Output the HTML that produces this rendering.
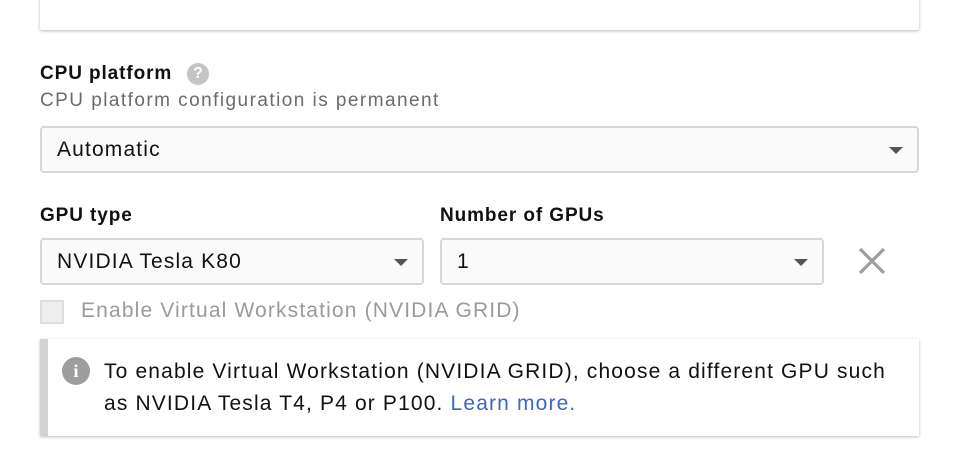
<!DOCTYPE html>
<html><head><meta charset="utf-8"><style>
*{box-sizing:border-box;margin:0;padding:0}
body{width:958px;height:468px;background:#fff;font-family:"Liberation Sans",Arial,sans-serif;position:relative;overflow:hidden;color:#202124}
.abs{position:absolute}
.card{left:40px;top:-4px;width:879px;height:34px;background:#fff;box-shadow:0 1px 3px rgba(0,0,0,.28);border-radius:2px}
.lbl{font-weight:bold;font-size:19px;letter-spacing:0.9px;color:#111}
.big{font-size:21px;letter-spacing:1.15px}
.sel{border:2px solid #d7d7d7;border-radius:4px;background:#fafafa;height:47px;color:#111;padding:0 0 0 15px;line-height:43px}
.arr{position:absolute;right:14px;top:19px;width:0;height:0;border-left:7px solid transparent;border-right:7px solid transparent;border-top:7px solid #555}
</style></head><body>
<div class="abs card"></div>
<div class="abs lbl" style="left:40px;top:63px">CPU platform</div>
<div class="abs" style="left:187px;top:63px;width:22px;height:22px;border-radius:50%;background:#c4c4c4;color:#fff;font-weight:bold;font-size:16px;text-align:center;line-height:22px">?</div>
<div class="abs" style="left:40px;top:90px;font-size:19px;letter-spacing:1.45px;color:#6b6b6b">CPU platform configuration is permanent</div>
<div class="abs sel big" style="left:40px;top:126px;width:879px">Automatic<div class="arr"></div></div>
<div class="abs lbl" style="left:40px;top:205px">GPU type</div>
<div class="abs lbl" style="left:440px;top:205px">Number of GPUs</div>
<div class="abs sel big" style="left:40px;top:238px;width:384px">NVIDIA Tesla K80<div class="arr"></div></div>
<div class="abs sel big" style="left:440px;top:238px;width:384px">1<div class="arr"></div></div>
<svg class="abs" style="left:858px;top:247px" width="28" height="28" viewBox="0 0 28 28"><path d="M2 2L26 26M26 2L2 26" stroke="#9e9e9e" stroke-width="3.2"/></svg>
<div class="abs" style="left:40px;top:300px;width:24px;height:24px;background:#eee;border:2px solid #ddd"></div>
<div class="abs big" style="left:81px;top:299px;color:#9a9a9a">Enable Virtual Workstation (NVIDIA GRID)</div>
<div class="abs" style="left:40px;top:339px;width:879px;height:97px;background:#fff;border-left:8px solid #d3d3d3;box-shadow:0 1px 3px rgba(0,0,0,.25)"></div>
<div class="abs" style="left:62px;top:357px;width:28px;height:28px;border-radius:50%;background:#9e9e9e;color:#fff;font-weight:bold;font-size:18px;text-align:center;line-height:28px;font-family:'Liberation Serif',serif">i</div>
<div class="abs big" style="left:104px;top:356px;line-height:32px;color:#111;width:840px;white-space:nowrap">To enable Virtual Workstation (NVIDIA GRID), choose a different GPU such<br>as NVIDIA Tesla T4, P4 or P100. <span style="color:#3b66c8">Learn more.</span></div>
</body></html>
